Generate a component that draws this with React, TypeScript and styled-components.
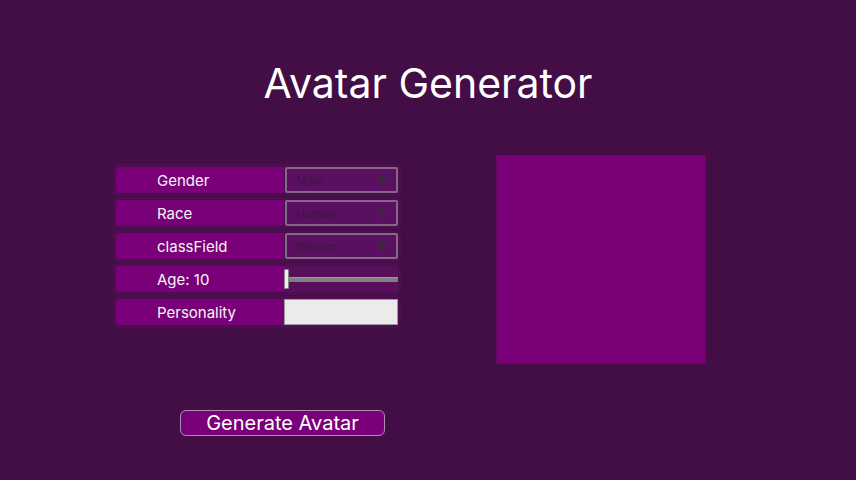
import React from "react";
import styled, { createGlobalStyle } from "styled-components";

const Global = createGlobalStyle`
  html, body { margin: 0; padding: 0; background: #430d46; }
  body { font-family: Inter, "Noto Sans", sans-serif; color: #fff; }
`;

const Page = styled.div`
  width: 856px;
  height: 480px;
  display: flex;
  flex-direction: column;
  overflow: hidden;
`;

const Title = styled.h1`
  margin: 58px 0 0;
  font-size: 41px;
  font-weight: 400;
  line-height: 50px;
  text-align: center;
  color: #ffffff;
`;

const Main = styled.div`
  display: flex;
  align-items: flex-start;
  gap: 96px;
  padding-left: 113px;
  margin-top: 47px;
`;

const Form = styled.div`
  display: flex;
  flex-direction: column;
  gap: 1px;
  margin-top: 9px;
`;

const Row = styled.div`
  display: flex;
  width: 282px;
  padding: 3px;
  background: #4c0e4f;
  border-radius: 3px;
`;

const Label = styled.div`
  width: 168px;
  height: 26px;
  box-sizing: border-box;
  padding-left: 41px;
  background: #7a0079;
  border-radius: 2px 0 0 2px;
  display: flex;
  align-items: center;
  font-size: 15px;
  font-weight: 400;
  color: #f6f6f6;
`;

const Widget = styled.div`
  flex: 1;
  height: 26px;
  position: relative;
  display: flex;
  align-items: center;
  background: #570f5b;
`;

const Select = styled.div`
  flex: 1;
  height: 26px;
  box-sizing: border-box;
  margin-left: 1px;
  border: 2px solid #866886;
  border-radius: 2px;
  background: #5a1060;
  display: flex;
  align-items: center;
  justify-content: space-between;
  padding: 0 9px 0 9px;
  font-size: 12px;
  color: #3e1642;
`;

const Arrow = styled.span`
  font-size: 11px;
  color: #3a2a3c;
`;

const Track = styled.div`
  position: absolute;
  left: 4px;
  right: 0;
  top: 11px;
  height: 5px;
  background: #7f7f7f;
  border-top: 1px solid #9a9a9a;
  box-sizing: border-box;
`;

const Thumb = styled.div`
  position: absolute;
  left: 0;
  top: 3px;
  width: 5px;
  height: 20px;
  box-sizing: border-box;
  background: #eeeeee;
  border: 1px solid #8a8a8a;
  border-radius: 1px;
`;

const TextInput = styled.div`
  flex: 1;
  height: 26px;
  box-sizing: border-box;
  background: #ebebeb;
  border: 1px solid #9a9a9a;
`;

const Avatar = styled.div`
  width: 208px;
  height: 207px;
  margin-top: 1px;
  background: #7a0078;
  box-shadow: 0 0 0 1px #5e0b60;
`;

const Button = styled.button`
  margin: 47px 0 0 180px;
  width: 205px;
  height: 26px;
  box-sizing: border-box;
  border: 1px solid #b08cb0;
  border-radius: 6px;
  background: #7a0079;
  color: #ffffff;
  font-family: Inter, "Noto Sans", sans-serif;
  font-size: 20px;
  line-height: 22px;
  padding: 0;
`;

const selects = [
  { label: "Gender", value: "Male" },
  { label: "Race", value: "Human" },
  { label: "classField", value: "Warrior" },
];

export default function App() {
  return (
    <Page>
      <Global />
      <Title>Avatar Generator</Title>
      <Main>
        <Form>
          {selects.map((s) => (
            <Row key={s.label}>
              <Label>{s.label}</Label>
              <Select>
                <span>{s.value}</span>
                <Arrow>▼</Arrow>
              </Select>
            </Row>
          ))}
          <Row>
            <Label>Age: 10</Label>
            <Widget>
              <Track />
              <Thumb />
            </Widget>
          </Row>
          <Row>
            <Label>Personality</Label>
            <TextInput />
          </Row>
        </Form>
        <Avatar />
      </Main>
      <Button>Generate Avatar</Button>
    </Page>
  );
}
